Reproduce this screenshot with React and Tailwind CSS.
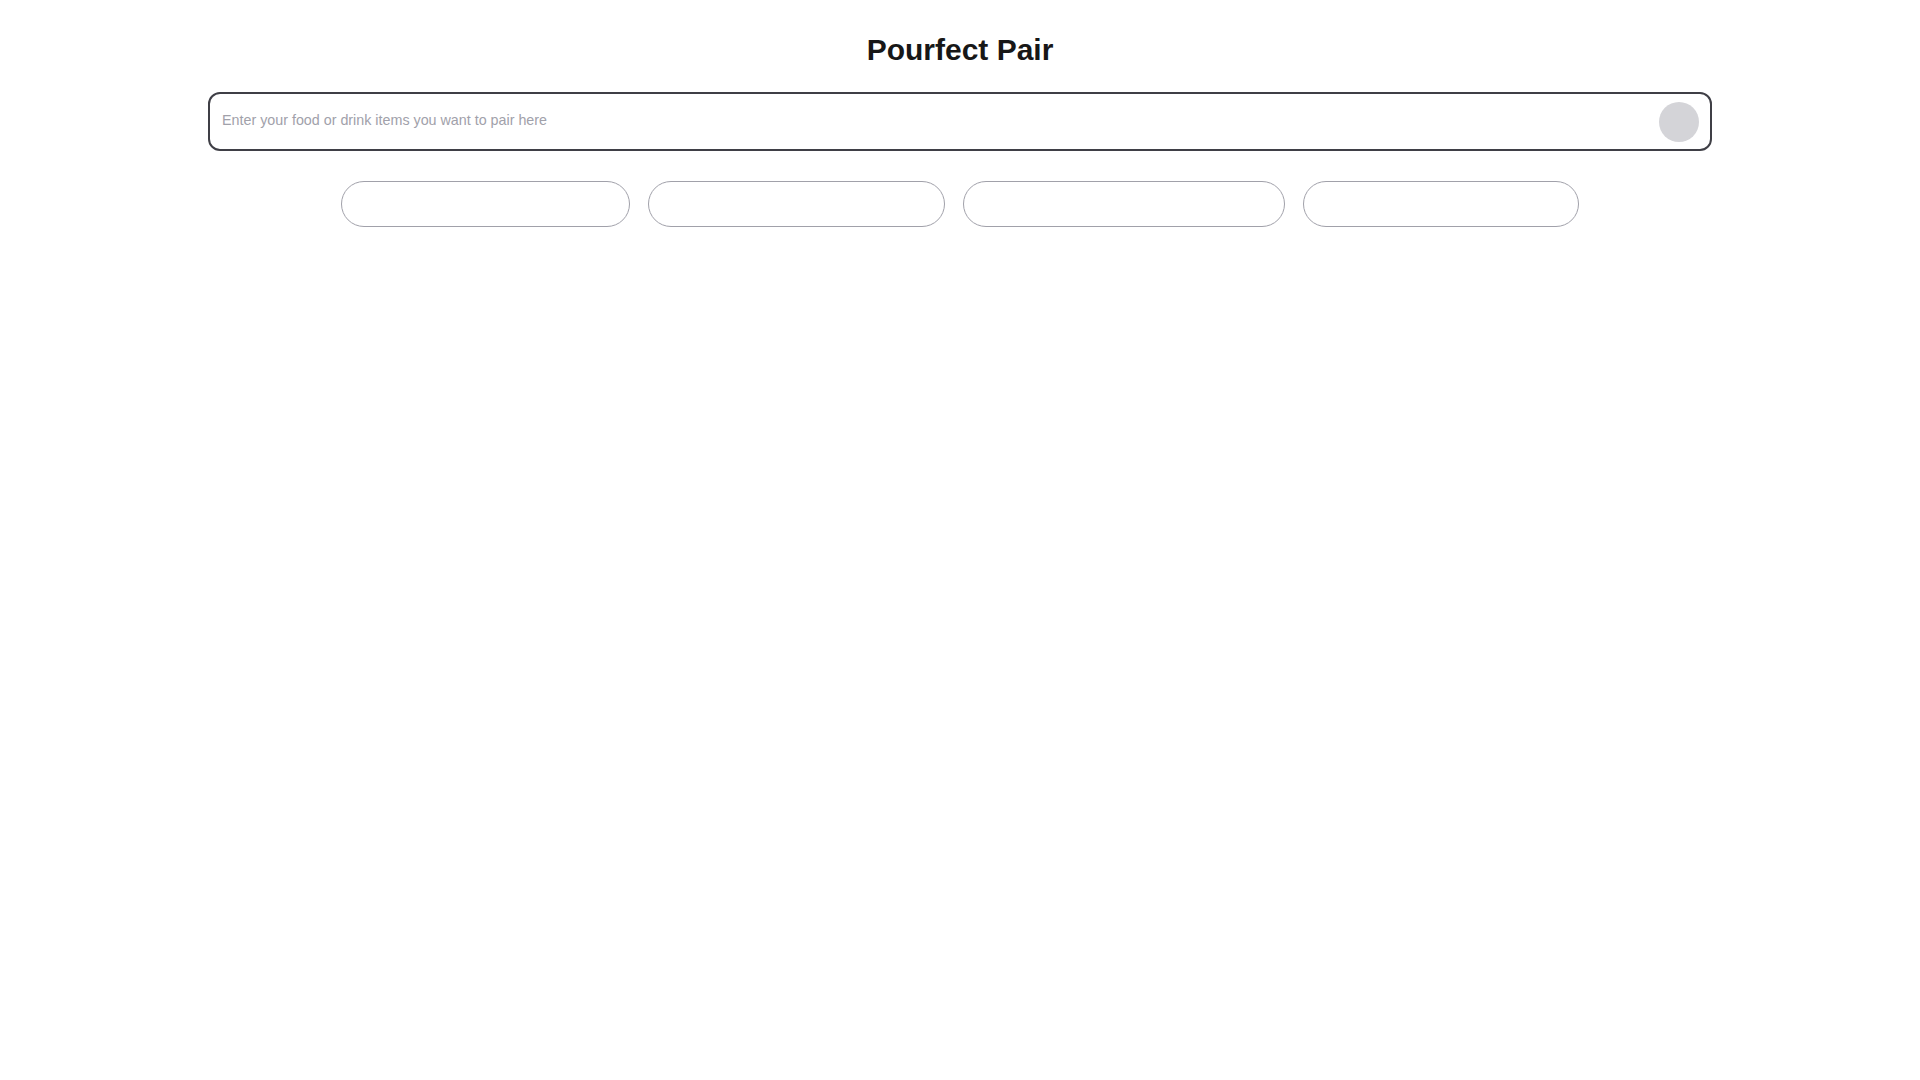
import { useState } from 'react';

const SUGGESTIONS = [
  { id: 1, width: 'w-[289px]' },
  { id: 2, width: 'w-[297px]' },
  { id: 3, width: 'w-[322px]' },
  { id: 4, width: 'w-[276px]' },
];

export default function App() {
  const [query, setQuery] = useState('');

  return (
    <div className="min-h-screen bg-white px-52 pt-8 font-['Liberation_Sans',Arial,sans-serif]">
      <h1 className="text-center text-3xl font-bold text-[#171717]">Pourfect Pair</h1>

      {/* Search box */}
      <form
        onSubmit={e => e.preventDefault()}
        className="mt-6 flex h-[59px] items-center rounded-xl border-2 border-[#3f3f46] pl-3 pr-[11px]"
      >
        <input
          type="text"
          value={query}
          onChange={e => setQuery(e.target.value)}
          placeholder="Enter your food or drink items you want to pair here"
          className="flex-1 bg-transparent text-[14.3px] text-[#27272a] placeholder:text-[#a1a1aa] outline-none -mt-0.5"
        />
        <button
          type="submit"
          disabled={!query.trim()}
          className="h-10 w-10 shrink-0 rounded-full bg-[#d4d4d8]"
          aria-label="Pair"
        />
      </form>

      {/* Suggestion pills */}
      <div className="mt-[30px] flex justify-center gap-[18px]">
        {SUGGESTIONS.map(s => (
          <button
            key={s.id}
            className={`h-[46px] ${s.width} rounded-full border border-[#a1a1aa] bg-white`}
          />
        ))}
      </div>
    </div>
  );
}
